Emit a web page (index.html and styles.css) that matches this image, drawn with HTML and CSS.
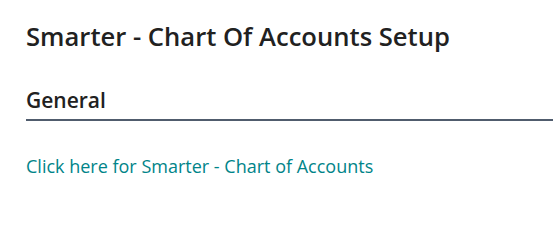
FILE: index.html
```html
<html>
<head>
    <title>Smarter - Chart Of Accounts Setup</title>
    <link rel="stylesheet" href="styles.css">
</head>
<body>
    <div class="page">
        <h1 class="page-title">Smarter - Chart Of Accounts Setup</h1>
        <section class="group">
            <h2 class="group-title">General</h2>
            <div class="group-body">
                <a class="action-link" href="#">Click here for Smarter - Chart of Accounts</a>
            </div>
        </section>
    </div>
</body>
</html>
```

FILE: styles.css
```css
body { margin: 0; background-color: #ffffff; font-family: "Open Sans", "Noto Sans", Arial, sans-serif; color: #212121; }
.page { padding: 19px 0 0 26px; }
.page-title { margin: 0; font-size: 25.6px; font-weight: 600; line-height: 36px; }
.group { margin-top: 31px; }
.group-title { margin: 0; font-size: 21px; font-weight: 600; line-height: 28px; padding-bottom: 5px; border-bottom: 2px solid #505c6d; }
.group-body { padding-top: 33px; line-height: 24px; }
.action-link { color: #008489; text-decoration: none; font-size: 18px; }
```
